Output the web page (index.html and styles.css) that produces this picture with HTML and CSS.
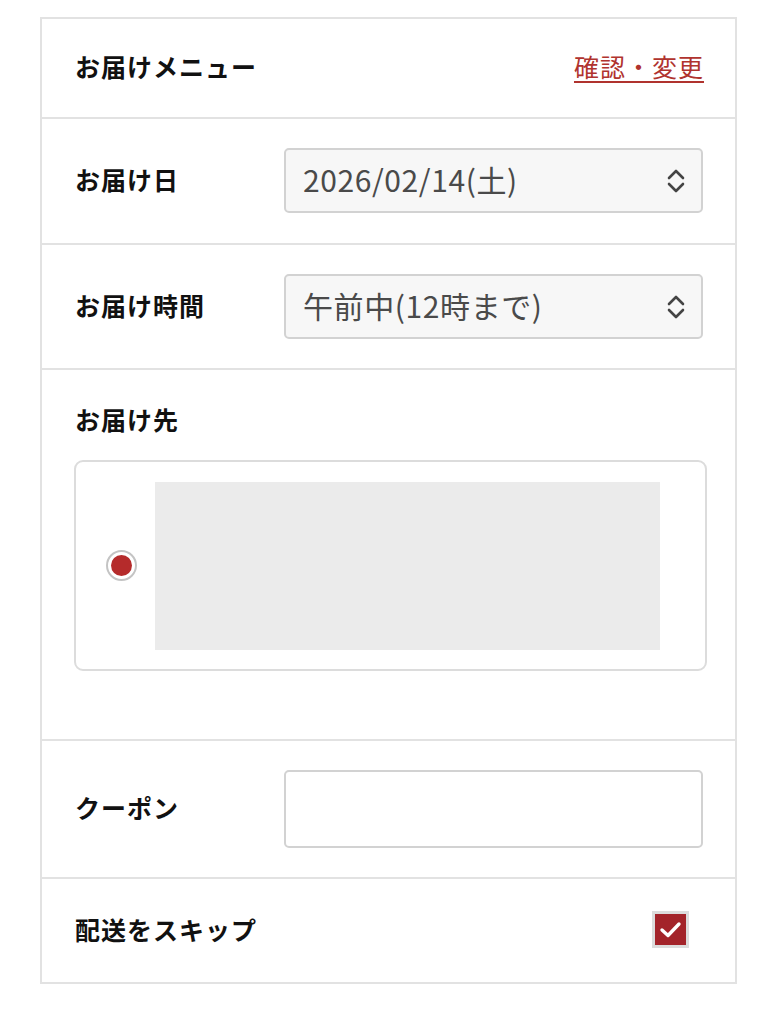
FILE: index.html
```html
<!doctype html>
<html>

<head>
    <meta charset="utf-8">
    <title>お届けメニュー</title>
    <link rel="stylesheet" href="styles.css">
</head>

<body>
    <div class="panel">
        <div class="row head">
            <span class="label">お届けメニュー</span>
            <a class="change" href="#change">確認・変更</a>
        </div>
        <div class="row field">
            <span class="label">お届け日</span>
            <div class="select">
                <span>2026/02/14(土)</span>
                <svg class="chev" width="18" height="26" viewBox="0 0 18 26">
                    <path d="M2 10 L9 3 L16 10 M2 16 L9 23 L16 16" fill="none" stroke="#444" stroke-width="2.6" stroke-linecap="round" stroke-linejoin="round"/>
                </svg>
            </div>
        </div>
        <div class="row field time">
            <span class="label">お届け時間</span>
            <div class="select">
                <span>午前中(12時まで)</span>
                <svg class="chev" width="18" height="26" viewBox="0 0 18 26">
                    <path d="M2 10 L9 3 L16 10 M2 16 L9 23 L16 16" fill="none" stroke="#444" stroke-width="2.6" stroke-linecap="round" stroke-linejoin="round"/>
                </svg>
            </div>
        </div>
        <div class="row address">
            <span class="label">お届け先</span>
            <div class="card">
                <span class="radio"><span class="dot"></span></span>
                <div class="placeholder"></div>
            </div>
        </div>
        <div class="row field coupon">
            <span class="label">クーポン</span>
            <div class="input"></div>
        </div>
        <div class="row skip">
            <span class="label">配送をスキップ</span>
            <span class="check">
                <svg width="31" height="31" viewBox="0 0 31 31">
                    <path d="M7 16 L13 21.5 L24 10" fill="none" stroke="#fff" stroke-width="3.4" stroke-linecap="round" stroke-linejoin="round"/>
                </svg>
            </span>
        </div>
    </div>
</body>

</html>
```

FILE: styles.css
```css
body {
    margin: 0;
    background: #fff;
    font-family: "Noto Sans CJK JP", "Noto Sans", sans-serif;
    color: #111;
}

.panel {
    width: 697px;
    margin: 17px 0 0 40px;
    border: 2px solid #e2e2e2;
    box-sizing: border-box;
}

.row {
    border-bottom: 2px solid #e2e2e2;
    padding: 0 32px 0 33px;
}

.row:last-child {
    border-bottom: none;
}

.label {
    display: block;
    font-size: 25px;
    font-weight: bold;
    letter-spacing: 1px;
    padding-bottom: 4px;
}

/* 見出し行 */
.head {
    height: 98px;
    display: flex;
    align-items: center;
    justify-content: space-between;
}

.change {
    font-size: 25px;
    color: #b0332e;
    letter-spacing: 1px;
    text-decoration: underline;
    text-underline-offset: 4px;
    text-decoration-thickness: 2px;
    margin-right: -1px;
    padding-bottom: 4px;
}

/* セレクト・入力行 */
.field {
    display: grid;
    grid-template-columns: 209px 1fr;
    align-items: center;
    padding-top: 29px;
    padding-bottom: 30px;
}

.time {
    padding-bottom: 29px;
}

.select {
    height: 65px;
    box-sizing: border-box;
    border: 2px solid #d2d2d2;
    border-radius: 5px;
    background: #f7f7f7;
    display: flex;
    align-items: center;
    justify-content: space-between;
    padding: 0 16px 3px 17px;
    font-size: 30px;
    letter-spacing: 0.6px;
    color: #4a4a4a;
}

.select .chev {
    margin-top: 3px;
}

.coupon {
    padding-bottom: 29px;
}

.input {
    height: 78px;
    box-sizing: border-box;
    border: 2px solid #d2d2d2;
    border-radius: 5px;
    background: #fff;
}

/* お届け先 */
.address {
    padding-top: 31px;
    padding-bottom: 68px;
}

.address .label {
    line-height: 36px;
    padding-bottom: 0;
}

.card {
    margin: 23px -4px 0 -1px;
    height: 211px;
    box-sizing: border-box;
    border: 2px solid #dcdcdc;
    border-radius: 9px;
    display: flex;
    align-items: center;
    padding: 0 45px 0 30px;
    gap: 18px;
}

.radio {
    width: 31px;
    height: 31px;
    box-sizing: border-box;
    border: 2px solid #c4c4c4;
    border-radius: 50%;
    display: flex;
    align-items: center;
    justify-content: center;
    flex: none;
}

.dot {
    width: 21px;
    height: 21px;
    border-radius: 50%;
    background: #b52b2b;
}

.placeholder {
    flex: 1;
    height: 168px;
    background: #ebebeb;
}

/* スキップ */
.skip {
    height: 100px;
    display: flex;
    align-items: center;
    justify-content: space-between;
    padding-right: 46px;
    padding-bottom: 3px;
}

.skip .label {
    padding-bottom: 0;
}

.check {
    width: 37px;
    height: 37px;
    box-sizing: border-box;
    border: 3px solid #dcdcdc;
    background: #a3242a;
    display: flex;
    align-items: center;
    justify-content: center;
}
```
